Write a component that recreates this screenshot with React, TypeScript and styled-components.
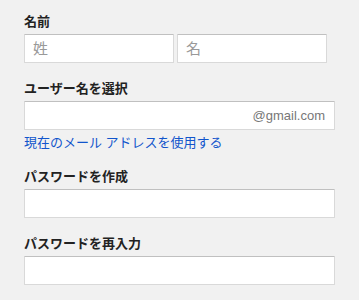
import { FC } from "react";
import styled, { createGlobalStyle } from "styled-components";

const GlobalStyle = createGlobalStyle`
	body {
		margin: 0;
		background: #f1f1f1;
		font-family: Arial, "Liberation Sans", "Noto Sans CJK JP", sans-serif;
		color: #222;
	}
`;

export const SignupForm: FC = () => {
	return (
		<Wrapper>
			<GlobalStyle />
			<Field>
				<Label>名前</Label>
				<NameRow>
					<Input placeholder='姓' />
					<Input placeholder='名' />
				</NameRow>
			</Field>

			<Field>
				<Label>ユーザー名を選択</Label>
				<SuffixBox>
					<Input />
					<Suffix>@gmail.com</Suffix>
				</SuffixBox>
				<Link href='#'>現在のメール アドレスを使用する</Link>
			</Field>

			<Field>
				<Label>パスワードを作成</Label>
				<Input type='password' />
			</Field>

			<Field>
				<Label>パスワードを再入力</Label>
				<Input type='password' />
			</Field>
		</Wrapper>
	);
};

export default SignupForm;

const Wrapper = styled.div`
	width: 311px;
	padding: 13px 0 0 24px;
	display: flex;
	flex-direction: column;
	gap: 17px;
`;

const Field = styled.div`
	display: flex;
	flex-direction: column;
`;

const Label = styled.label`
	display: block;
	font-family: "Liberation Sans", "Noto Sans CJK JP", sans-serif;
	font-size: 13px;
	font-weight: bold;
	line-height: 17px;
	margin-bottom: 4px;
	color: #222;
`;

const NameRow = styled.div`
	display: grid;
	grid-template-columns: 150px 150px;
	gap: 3px;
`;

const Input = styled.input`
	box-sizing: border-box;
	width: 100%;
	height: 29px;
	margin: 0;
	padding: 0 8px;
	background: #fff;
	border: 1px solid #d9d9d9;
	border-top-color: #c0c0c0;
	border-radius: 1px;
	font-family: "Liberation Sans", "Noto Sans CJK JP", sans-serif;
	font-size: 15px;
	color: #222;
	outline: none;
	&::placeholder {
		color: #999;
	}
`;

const SuffixBox = styled.div`
	position: relative;
`;

const Suffix = styled.span`
	position: absolute;
	right: 10px;
	top: 0;
	line-height: 29px;
	font-family: "Liberation Sans", sans-serif;
	font-size: 13px;
	color: #777;
	pointer-events: none;
`;

const Link = styled.a`
	margin-top: 5px;
	font-family: "Liberation Sans", "Noto Sans CJK JP", sans-serif;
	font-size: 13px;
	line-height: 16px;
	color: #15c;
	text-decoration: none;
	align-self: flex-start;
`;
